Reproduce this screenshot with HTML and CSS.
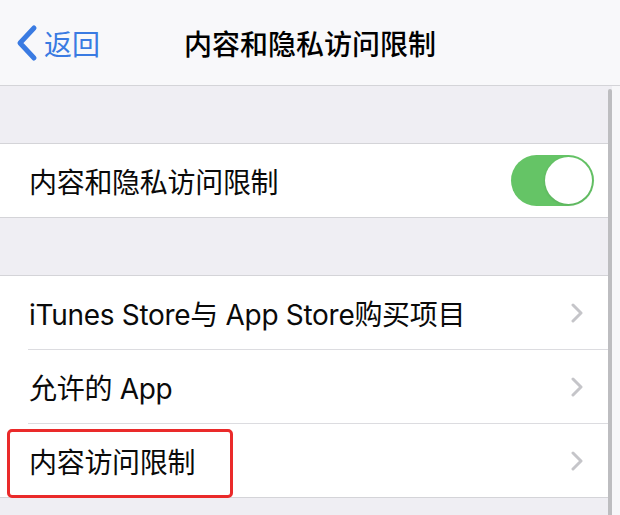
FILE: index.html
```html
<!DOCTYPE html>
<html lang="zh-CN">
<head>
    <meta charset="UTF-8">
    <meta name="viewport" content="width=device-width, initial-scale=1.0">
    <title>内容和隐私访问限制</title>
    <link rel="stylesheet" href="styles.css">
</head>
<body>
    <div id="screen">
        <header id="navbar">
            <a href="" class="back">
                <svg width="24" height="38" viewBox="0 0 24 38">
                    <path d="M20 4 L6 19 L20 34" fill="none" stroke="#3a7be2" stroke-width="5" stroke-linecap="round" stroke-linejoin="round"/>
                </svg>
                <span>返回</span>
            </a>
            <h1 class="title">内容和隐私访问限制</h1>
            <div></div>
        </header>

        <div class="gap"></div>

        <div class="group">
            <div class="row">
                <span class="label">内容和隐私访问限制</span>
                <div class="switch on"><div class="knob"></div></div>
            </div>
        </div>

        <div class="gap"></div>

        <div class="group">
            <div class="row link">
                <span class="label">iTunes Store与 App Store购买项目</span>
                <svg class="chevron" width="14" height="20" viewBox="0 0 14 20"><path d="M3 2 L11 10 L3 18" /></svg>
            </div>
            <div class="row link">
                <span class="label">允许的 App</span>
                <svg class="chevron" width="14" height="20" viewBox="0 0 14 20"><path d="M3 2 L11 10 L3 18" /></svg>
            </div>
            <div class="row link">
                <span class="label">内容访问限制</span>
                <svg class="chevron" width="14" height="20" viewBox="0 0 14 20"><path d="M3 2 L11 10 L3 18" /></svg>
            </div>
        </div>

        <div class="gap"></div>

        <!-- highlight around the last row -->
        <div class="mark"></div>
        <div class="scrollbar"></div>
    </div>
</body>
</html>
```

FILE: styles.css
```css
* {
    margin: 0;
    padding: 0;
    box-sizing: border-box;
}

body {
    font-family: Inter, "Noto Sans CJK SC", sans-serif;
    background-color: #f7f7f9;
    color: #111;
}

#screen {
    position: relative;
    width: 620px;
    height: 515px;
    overflow: hidden;
    background-color: #f7f7f9;
}

#navbar {
    height: 86px;
    background-color: #f8f8fa;
    border-bottom: 1px solid #d4d4d8;
    display: grid;
    grid-template-columns: 1fr auto 1fr;
    align-items: center;
    padding: 0 14px;
}

.back {
    display: flex;
    align-items: center;
    gap: 6px;
    text-decoration: none;
    color: #3a7be2;
    font-size: 28px;
    font-family: "Noto Sans CJK SC", sans-serif;
}

.title {
    font-family: "Noto Sans CJK SC", sans-serif;
    font-size: 28px;
    font-weight: 500;
    color: #000;
}

.gap {
    height: 57px;
    width: 612px;
    background-color: #efeef3;
}

.group {
    background-color: #fff;
    border-top: 1px solid #d4d4d8;
    border-bottom: 1px solid #d4d4d8;
    width: 612px;
}

.row {
    height: 73px;
    display: flex;
    align-items: center;
    justify-content: space-between;
    padding: 0 28px 0 29px;
}

.group .row + .row {
    border-top: 1px solid #dcdce0;
    margin-left: 28px;
    padding-left: 1px;
    height: 74px;
}

.label {
    font-size: 28px;
    letter-spacing: -0.3px;
    color: #0a0a0a;
}

.switch {
    width: 83px;
    height: 51px;
    border-radius: 26px;
    background-color: #65c466;
    padding: 2px;
    display: flex;
    margin-right: -10px;
}

.switch.on {
    justify-content: flex-end;
}

.knob {
    width: 47px;
    height: 47px;
    border-radius: 50%;
    background-color: #fff;
    box-shadow: 0 1px 3px rgba(0, 0, 0, 0.12);
}

.chevron path {
    fill: none;
    stroke: #c5c5c9;
    stroke-width: 3;
    stroke-linecap: round;
    stroke-linejoin: round;
}

.mark {
    position: absolute;
    left: 7px;
    top: 429px;
    width: 226px;
    height: 69px;
    border: 3px solid #ea2a2a;
    border-radius: 5px;
}

.scrollbar {
    position: absolute;
    left: 608px;
    top: 89px;
    width: 4px;
    height: 430px;
    border-radius: 2px;
    background-color: #bdbdc0;
}
```
